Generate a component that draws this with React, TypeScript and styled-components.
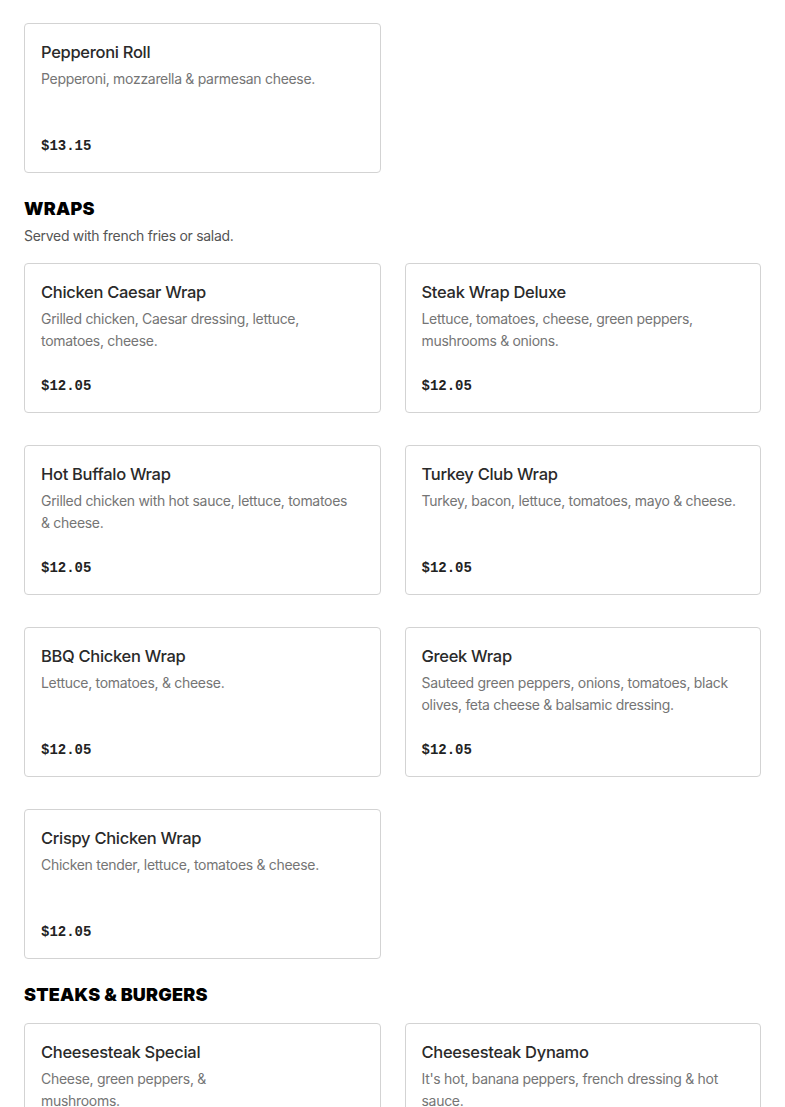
import React from "react";
import styled, { createGlobalStyle } from "styled-components";

const GlobalStyle = createGlobalStyle`
  body {
    margin: 0;
    background: #fff;
    font-family: Inter, "Noto Sans", sans-serif;
    color: #2d2d2d;
  }
`;

interface Item {
  name: string;
  desc: string;
  price: string;
  narrow?: boolean;
}

interface Section {
  title?: string;
  note?: string;
  items: Item[];
}

const sections: Section[] = [
  {
    items: [
      {
        name: "Pepperoni Roll",
        desc: "Pepperoni, mozzarella & parmesan cheese.",
        price: "$13.15",
      },
    ],
  },
  {
    title: "WRAPS",
    note: "Served with french fries or salad.",
    items: [
      {
        name: "Chicken Caesar Wrap",
        desc: "Grilled chicken, Caesar dressing, lettuce, tomatoes, cheese.",
        price: "$12.05",
      },
      {
        name: "Steak Wrap Deluxe",
        desc: "Lettuce, tomatoes, cheese, green peppers, mushrooms & onions.",
        price: "$12.05",
      },
      {
        name: "Hot Buffalo Wrap",
        desc: "Grilled chicken with hot sauce, lettuce, tomatoes & cheese.",
        price: "$12.05",
      },
      {
        name: "Turkey Club Wrap",
        desc: "Turkey, bacon, lettuce, tomatoes, mayo & cheese.",
        price: "$12.05",
      },
      {
        name: "BBQ Chicken Wrap",
        desc: "Lettuce, tomatoes, & cheese.",
        price: "$12.05",
      },
      {
        name: "Greek Wrap",
        desc: "Sauteed green peppers, onions, tomatoes, black olives, feta cheese & balsamic dressing.",
        price: "$12.05",
      },
      {
        name: "Crispy Chicken Wrap",
        desc: "Chicken tender, lettuce, tomatoes & cheese.",
        price: "$12.05",
      },
    ],
  },
  {
    title: "STEAKS & BURGERS",
    items: [
      {
        name: "Cheesesteak Special",
        desc: "Cheese, green peppers, & mushrooms.",
        price: "$12.95",
        narrow: true,
      },
      {
        name: "Cheesesteak Dynamo",
        desc: "It's hot, banana peppers, french dressing & hot sauce.",
        price: "$12.95",
      },
    ],
  },
];

const Page = styled.div`
  padding: 23px 24px 0;
  display: flex;
  flex-direction: column;
  gap: 24px;
`;

const SectionBlock = styled.section`
  display: flex;
  flex-direction: column;
`;

const SectionTitle = styled.h2`
  margin: 0;
  font-family: Inter, "Noto Sans", sans-serif;
  font-size: 18px;
  font-weight: 900;
  line-height: 24px;
  color: #000;
  letter-spacing: 0.2px;
`;

const SectionNote = styled.p`
  margin: 4px 0 0;
  font-size: 14px;
  line-height: 22px;
  color: #555;
  letter-spacing: -0.3px;
`;

const Grid = styled.div<{ $spaced: boolean }>`
  display: grid;
  grid-template-columns: 1fr 1fr;
  column-gap: 24px;
  row-gap: 32px;
  margin-top: ${(p) => (p.$spaced ? "16px" : "0")};
`;

const Card = styled.div`
  box-sizing: border-box;
  height: 150px;
  border: 1px solid #d3d3d3;
  border-radius: 4px;
  padding: 17px 16px 16px;
  display: flex;
  flex-direction: column;
`;

const Name = styled.div`
  font-size: 16.5px;
  font-weight: 500;
  line-height: 22px;
  color: #2a2a2a;
  letter-spacing: -0.3px;
`;

const Desc = styled.div<{ $narrow?: boolean }>`
  margin-top: 5px;
  padding-right: 6px;
  font-size: 14px;
  line-height: 22px;
  color: #757575;
  letter-spacing: -0.3px;
  max-width: ${(p) => (p.$narrow ? "190px" : "none")};
`;

const Price = styled.div`
  margin-top: auto;
  font-family: "Liberation Mono", "DejaVu Sans Mono", monospace;
  font-size: 14px;
  font-weight: 700;
  line-height: 20px;
  color: #222;
`;

export default function App() {
  return (
    <>
      <GlobalStyle />
      <Page>
        {sections.map((s, i) => (
          <SectionBlock key={i}>
            {s.title && <SectionTitle>{s.title}</SectionTitle>}
            {s.note && <SectionNote>{s.note}</SectionNote>}
            <Grid $spaced={!!s.title}>
              {s.items.map((it) => (
                <Card key={it.name}>
                  <Name>{it.name}</Name>
                  <Desc $narrow={it.narrow}>{it.desc}</Desc>
                  <Price>{it.price}</Price>
                </Card>
              ))}
            </Grid>
          </SectionBlock>
        ))}
      </Page>
    </>
  );
}
